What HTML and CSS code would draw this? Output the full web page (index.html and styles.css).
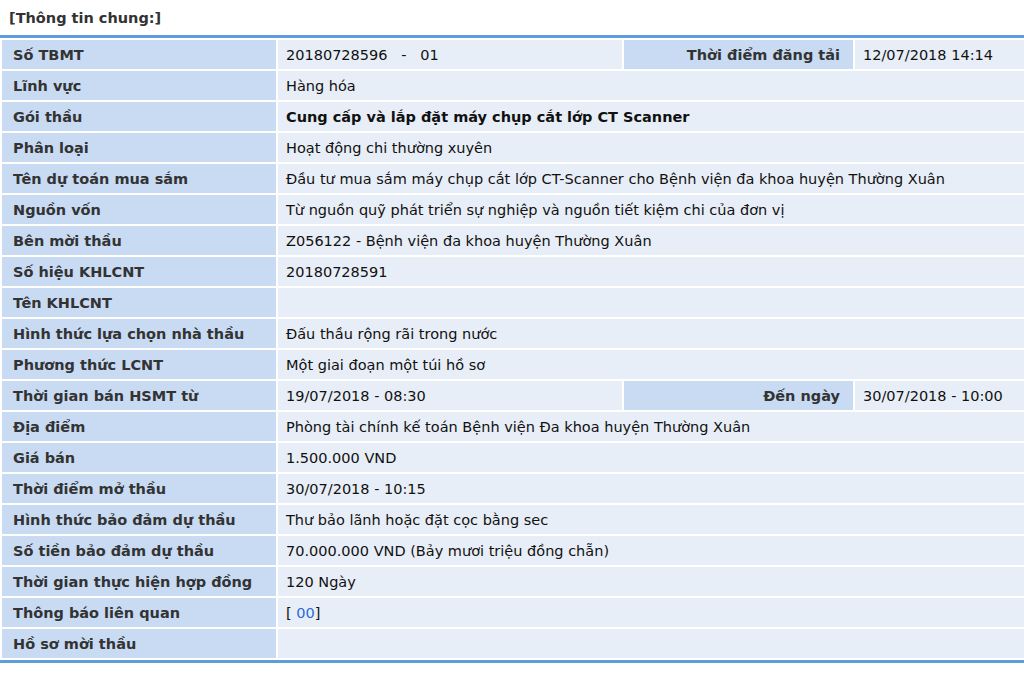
FILE: index.html
```html
<!DOCTYPE html>
<html lang="vi">
<head>
<meta charset="utf-8">
<title>Thông tin chung</title>
<link rel="stylesheet" href="styles.css">
</head>
<body>
<div class="section-title">[Thông tin chung:]</div>
<table class="info">
  <colgroup>
    <col class="c-label"><col class="c-val"><col class="c-label2"><col class="c-val2">
  </colgroup>
  <tr><th>Số TBMT</th><td>20180728596 &nbsp; - &nbsp; 01</td><th class="right">Thời điểm đăng tải</th><td>12/07/2018 14:14</td></tr>
  <tr><th>Lĩnh vực</th><td colspan="3">Hàng hóa</td></tr>
  <tr><th>Gói thầu</th><td colspan="3" class="strong">Cung cấp và lắp đặt máy chụp cắt lớp CT Scanner</td></tr>
  <tr><th>Phân loại</th><td colspan="3">Hoạt động chi thường xuyên</td></tr>
  <tr><th>Tên dự toán mua sắm</th><td colspan="3">Đầu tư mua sắm máy chụp cắt lớp CT-Scanner cho Bệnh viện đa khoa huyện Thường Xuân</td></tr>
  <tr><th>Nguồn vốn</th><td colspan="3">Từ nguồn quỹ phát triển sự nghiệp và nguồn tiết kiệm chi của đơn vị</td></tr>
  <tr><th>Bên mời thầu</th><td colspan="3">Z056122 - Bệnh viện đa khoa huyện Thường Xuân</td></tr>
  <tr><th>Số hiệu KHLCNT</th><td colspan="3">20180728591</td></tr>
  <tr><th>Tên KHLCNT</th><td colspan="3"></td></tr>
  <tr><th>Hình thức lựa chọn nhà thầu</th><td colspan="3">Đấu thầu rộng rãi trong nước</td></tr>
  <tr><th>Phương thức LCNT</th><td colspan="3">Một giai đoạn một túi hồ sơ</td></tr>
  <tr><th>Thời gian bán HSMT từ</th><td>19/07/2018 - 08:30</td><th class="right">Đến ngày</th><td>30/07/2018 - 10:00</td></tr>
  <tr><th>Địa điểm</th><td colspan="3">Phòng tài chính kế toán Bệnh viện Đa khoa huyện Thường Xuân</td></tr>
  <tr><th>Giá bán</th><td colspan="3">1.500.000 VND</td></tr>
  <tr><th>Thời điểm mở thầu</th><td colspan="3">30/07/2018 - 10:15</td></tr>
  <tr><th>Hình thức bảo đảm dự thầu</th><td colspan="3">Thư bảo lãnh hoặc đặt cọc bằng sec</td></tr>
  <tr><th>Số tiền bảo đảm dự thầu</th><td colspan="3">70.000.000 VND (Bảy mươi triệu đồng chẵn)</td></tr>
  <tr><th>Thời gian thực hiện hợp đồng</th><td colspan="3">120 Ngày</td></tr>
  <tr><th>Thông báo liên quan</th><td colspan="3">[ <a class="link" href="#">00</a>]</td></tr>
  <tr><th>Hồ sơ mời thầu</th><td colspan="3"></td></tr>
</table>
</body>
</html>
```
FILE: styles.css
```css
html, body {
  margin: 0;
  padding: 0;
  background: #ffffff;
  overflow: hidden;
}
body {
  font-family: "DejaVu Sans", Verdana, sans-serif;
  font-size: 14.5px;
  color: #111;
}
.section-title {
  height: 35px;
  line-height: 36px;
  padding-left: 9px;
  font-weight: bold;
  color: #333;
  font-size: 14.5px;
}
.info {
  width: calc(100% + 2px);
  border-collapse: separate;
  border-spacing: 2px;
  border-top: 3px solid #5e9ddc;
  border-bottom: 3px solid #5e9ddc;
  table-layout: fixed;
}
.c-label { width: 274px; }
.c-val { width: 344px; }
.c-label2 { width: 229px; }
.info th, .info td {
  height: 29px;
  padding: 0;
  vertical-align: middle;
  white-space: nowrap;
}
.info th {
  background: #c8dbf3;
  color: #333;
  text-align: left;
  font-weight: bold;
  padding-left: 11px;
}
.info th.right {
  text-align: right;
  padding-left: 0;
  padding-right: 13px;
}
.info td {
  background: #e8eef7;
  padding-left: 8px;
}
.info td.strong { font-weight: bold; color: #111; }
.link { color: #2a6ad9; text-decoration: none; }
```
